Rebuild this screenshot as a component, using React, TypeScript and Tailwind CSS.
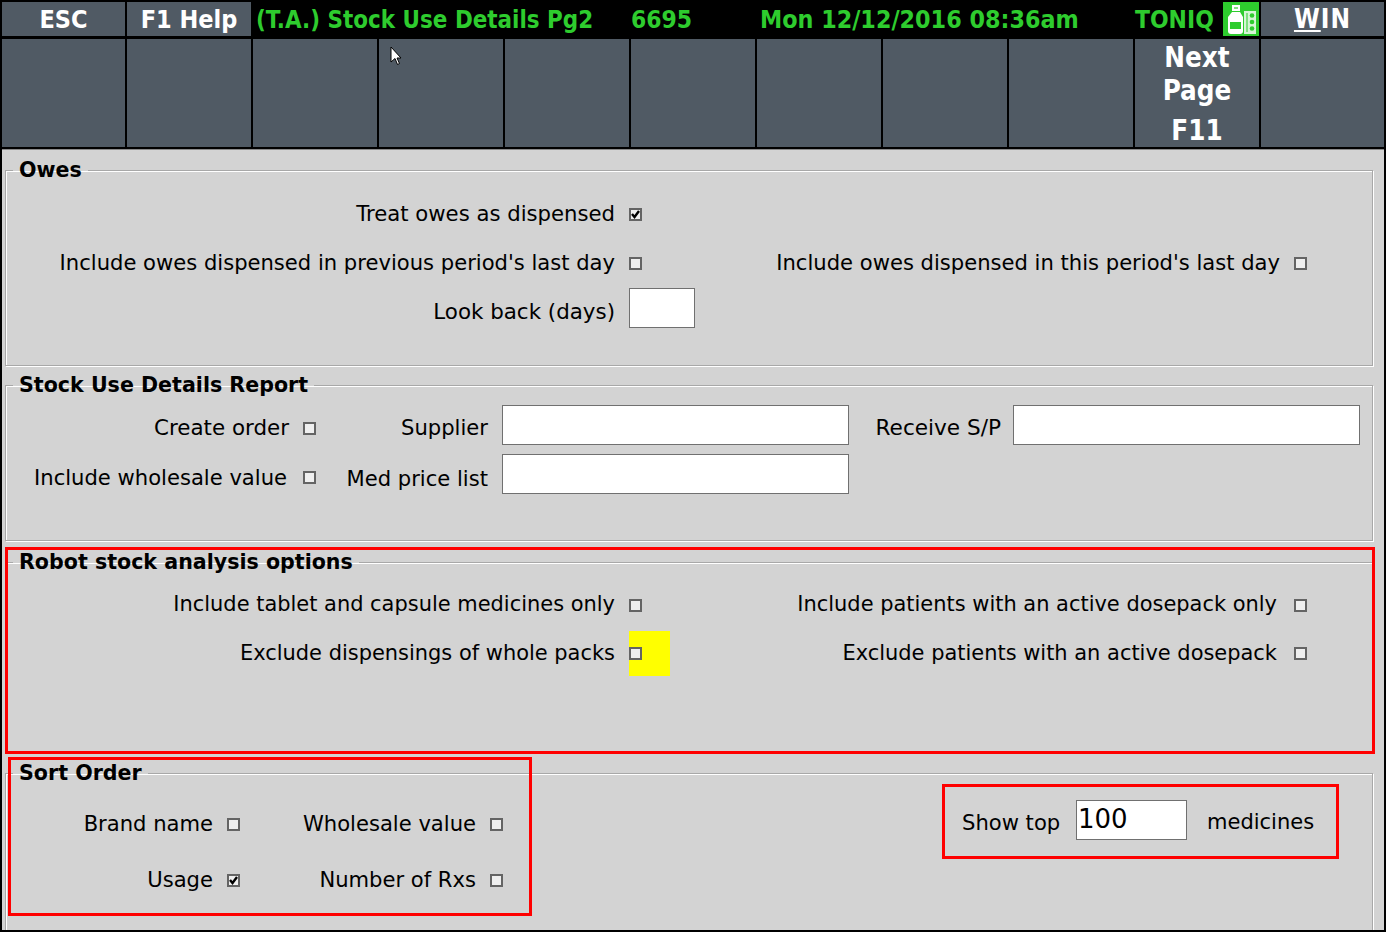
const Box = ({ checked = false }: { checked?: boolean }) => (
  <span className="block w-[13px] h-[13px] shrink-0 border-2 border-[#646464] bg-[#efefef] relative">
    {checked && (
      <svg viewBox="0 0 9 9" className="absolute inset-0 w-[9px] h-[9px]">
        <path d="M1 4 L3.5 7 L8 1" fill="none" stroke="#000" strokeWidth="2.4" />
      </svg>
    )}
  </span>
);

const Check = ({ label, w, gap = 14, checked = false, drop = 0 }: { label: string; w: number; gap?: number; checked?: boolean; drop?: number }) => (
  <div className="flex items-center shrink-0" style={{ width: w + gap + 13, paddingTop: drop }}>
    <span className="flex-1 text-right whitespace-nowrap">{label}</span>
    <span className="shrink-0" style={{ marginLeft: gap }}>
      <Box checked={checked} />
    </span>
  </div>
);

const Field = ({ w }: { w: string }) => <div className={`${w} h-[40px] bg-white border border-[#707070] shrink-0`} />;

const Group = ({ title, h, children }: { title: string; h: string; children: React.ReactNode }) => (
  <fieldset className={`${h} ml-[3px] mr-[11px] border border-[#a8a8a8] shadow-[inset_1px_1px_0_#fff,1px_1px_0_#fff] shrink-0`}>
    <legend className="ml-[7px] px-[6px] font-bold leading-[26px] text-[20.6px]">{title}</legend>
    {children}
  </fieldset>
);

const Head = ({ children }: { children: React.ReactNode }) => (
  <div className="bg-[#505a64] h-[34px] pt-[1px] flex items-center justify-center text-white font-bold text-[25px] [font-family:'DejaVu_Sans_Condensed','DejaVu_Sans',sans-serif] [font-stretch:condensed]">
    {children}
  </div>
);

const Green = ({ className, children }: { className: string; children: React.ReactNode }) => (
  <span className={`absolute top-0 h-[36px] leading-[36px] text-[#2ecc2e] font-bold whitespace-nowrap [font-family:'DejaVu_Sans_Condensed','DejaVu_Sans',sans-serif] [font-stretch:condensed] ${className}`}>
    {children}
  </span>
);

const blanks = [0, 1, 2, 3, 4, 5, 6, 7, 8];

export default function App() {
  return (
    <div className="relative w-[1386px] h-[932px] overflow-hidden bg-black px-[2px] pb-[2px] pt-[2px] text-black text-[21.1px] [font-family:'DejaVu_Sans',Verdana,sans-serif]">
      <div className="grid grid-cols-[123px_124px_1fr] gap-x-[2px] h-[34px]">
        <Head>ESC</Head>
        <Head>F1 Help</Head>
        <div className="relative">
          <Green className="left-[3px] text-[23.9px]">(T.A.) Stock Use Details Pg2</Green>
          <Green className="left-[378px] text-[24.4px]">6695</Green>
          <Green className="left-[507px] text-[24.8px]">Mon 12/12/2016 08:36am</Green>
          <Green className="left-[882px] text-[24.4px]">TONIQ</Green>
          <div className="absolute left-[970px] top-0 w-[36px] h-[34px] bg-[#2ecc2e]">
            <svg viewBox="0 0 36 34" className="w-[36px] h-[34px]">
              <path d="M9 3h8v6H9z" fill="#fff" />
              <path d="M11 5h4v2h-4z" fill="#2ecc2e" opacity="0.6" />
              <path d="M9 10h8l3 5v14a3 3 0 0 1-3 3H8a3 3 0 0 1-3-3V15z" fill="#fff" />
              <path d="M7 20h11v7H7z" fill="#2ecc2e" />
              <path d="M21 9h12v23H21z" fill="#d6f5d6" />
              <path d="M23 11h2v19h-2z" fill="#7fe07f" />
              <circle cx="29" cy="13.5" r="2.3" fill="#2ecc2e" />
              <circle cx="29" cy="20" r="2.3" fill="#2ecc2e" />
              <circle cx="29" cy="26.5" r="2.3" fill="#2ecc2e" />
            </svg>
          </div>
          <div className="absolute right-0 top-0 w-[123px]">
            <Head>
              <span className="text-[26px] tracking-[1px]">
                <span className="underline decoration-2 underline-offset-2">W</span>IN
              </span>
            </Head>
          </div>
        </div>
      </div>

      <div className="grid grid-cols-[123px_repeat(9,124px)_123px] gap-x-[2px] h-[108px] mt-[3px]">
        {blanks.map((i) => (
          <div key={i} className="bg-[#505a64]" />
        ))}
        <div className="bg-[#505a64] flex flex-col items-center text-white font-bold text-[27.5px] [font-family:'DejaVu_Sans_Condensed','DejaVu_Sans',sans-serif] [font-stretch:condensed]">
          <span className="leading-[33px] mt-[2px]">Next</span>
          <span className="leading-[33px]">Page</span>
          <span className="leading-[33px] mt-[7px]">F11</span>
        </div>
        <div className="bg-[#505a64]" />
      </div>

      <div className="mt-[2px] h-[781px] overflow-hidden bg-[#d3d3d3] border-t border-[#8a8a8a] flex flex-col">
        <div className="h-[7px] shrink-0" />
        <Group title="Owes" h="h-[209px]">
          <div className="pt-[17px]">
            <div className="flex items-center h-[28px] text-[21.2px]">
              <Check label="Treat owes as dispensed" w={609} checked />
            </div>
            <div className="flex items-center h-[28px] mt-[21px]">
              <Check label="Include owes dispensed in previous period's last day" w={609} />
              <Check label="Include owes dispensed in this period's last day" w={638} />
            </div>
            <div className="flex items-center h-[40px] mt-[11px]">
              <span className="w-[609px] text-right pt-[8px] text-[21.4px]">Look back (days)</span>
              <div className="ml-[14px]"><Field w="w-[66px]" /></div>
            </div>
          </div>
        </Group>
        <div className="h-[6px] shrink-0" />
        <Group title="Stock Use Details Report" h="h-[169px]">
          <div className="pt-[7px]">
            <div className="flex items-center h-[40px]">
              <div className="text-[21.4px]">
                <Check label="Create order" w={283} gap={14} drop={7} />
              </div>
              <span className="w-[172px] text-right pt-[6px]">Supplier</span>
              <div className="ml-[14px]"><Field w="w-[347px]" /></div>
              <span className="w-[152px] text-right pt-[6px] text-[21.6px] whitespace-nowrap">Receive S/P</span>
              <div className="ml-[12px]"><Field w="w-[347px]" /></div>
            </div>
            <div className="flex items-center h-[40px] mt-[9px]">
              <Check label="Include wholesale value" w={281} gap={16} drop={7} />
              <span className="w-[172px] text-right pt-[10px]">Med price list</span>
              <div className="ml-[14px]"><Field w="w-[347px]" /></div>
            </div>
          </div>
        </Group>
        <div className="h-[8px] shrink-0" />
        <Group title="Robot stock analysis options" h="h-[203px]">
          <div className="pt-[16px] text-[20.95px]">
            <div className="flex items-center h-[28px]">
              <Check label="Include tablet and capsule medicines only" w={609} />
              <Check label="Include patients with an active dosepack only" w={635} gap={17} />
            </div>
            <div className="flex items-center h-[45px] mt-[12px]">
              <span className="w-[609px] text-right shrink-0">Exclude dispensings of whole packs</span>
              <span className="ml-[14px] w-[41px] h-[45px] bg-[#ffff00] flex items-center shrink-0">
                <Box />
              </span>
              <Check label="Exclude patients with an active dosepack" w={607} gap={17} />
            </div>
          </div>
        </Group>
        <div className="h-[8px] shrink-0" />
        <Group title="Sort Order" h="h-[175px]">
          <div className="flex pt-[14px]">
            <div className="grid grid-cols-[234px_263px] grid-rows-[28px_28px] gap-y-[28px] mt-[10px]">
              <Check label="Brand name" w={207} />
              <Check label="Wholesale value" w={236} />
              <Check label="Usage" w={207} checked />
              <Check label="Number of Rxs" w={236} />
            </div>
            <div className="flex items-center h-[40px] ml-[459px]">
              <span className="w-[98px] whitespace-nowrap pt-[5px]">Show top</span>
              <div className="ml-[16px] w-[111px] h-[40px] bg-white border border-[#707070] text-[26px] leading-[37px] pl-[1px]">100</div>
              <span className="ml-[20px] pt-[5px] text-[21px]">medicines</span>
            </div>
          </div>
        </Group>
      </div>

      <div className="absolute left-[5px] top-[547px] w-[1370px] h-[207px] border-[3px] border-[#ff0000]" />
      <div className="absolute left-[8px] top-[757px] w-[524px] h-[159px] border-[3px] border-[#ff0000]" />
      <div className="absolute left-[942px] top-[784px] w-[397px] h-[75px] border-[3px] border-[#ff0000]" />

      <svg viewBox="0 0 12 20" className="absolute left-[390px] top-[46px] w-[12px] h-[20px]">
        <path d="M1 1v15l4-3.5 2.5 6 2-1-2.5-5.5H11z" fill="#fff" stroke="#000" strokeWidth="1" />
      </svg>
    </div>
  );
}
